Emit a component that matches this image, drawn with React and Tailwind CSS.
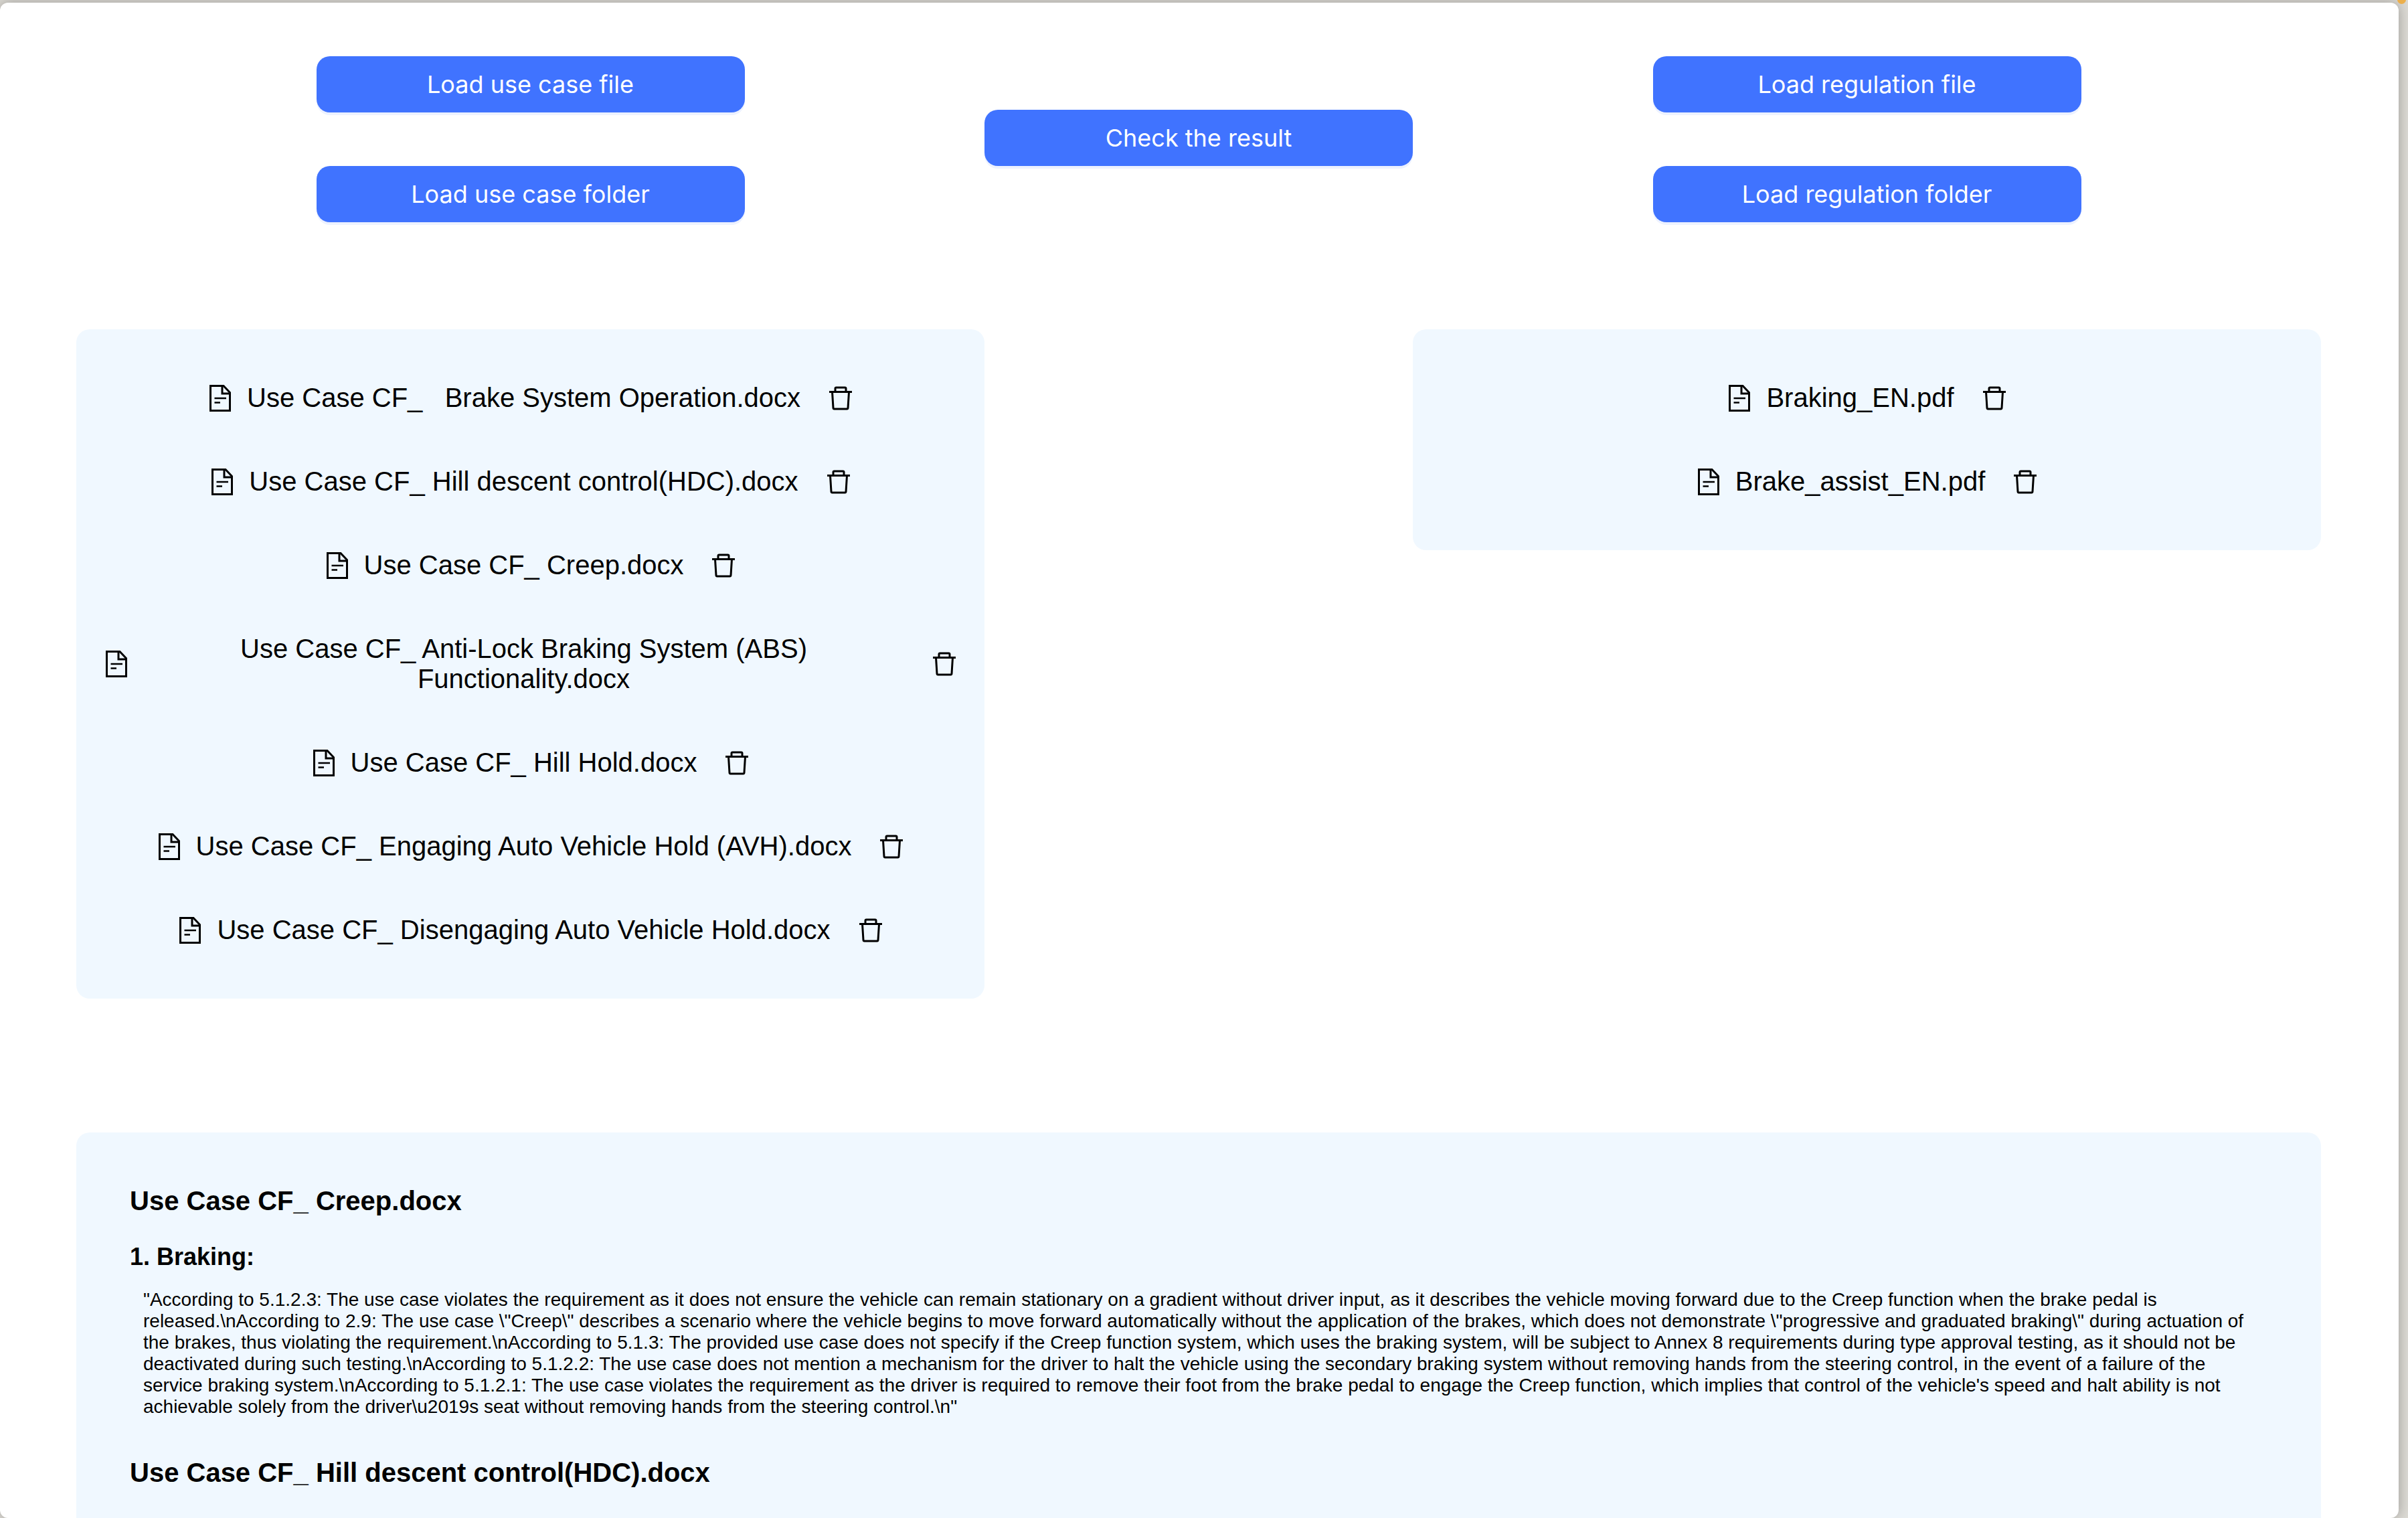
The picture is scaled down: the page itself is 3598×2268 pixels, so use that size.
const useCases = [
  'Use Case CF_ \u00a0 Brake System Operation.docx',
  'Use Case CF_ Hill descent control(HDC).docx',
  'Use Case CF_ Creep.docx',
  'Use Case CF_ Anti-Lock Braking System (ABS) Functionality.docx',
  'Use Case CF_ Hill Hold.docx',
  'Use Case CF_ Engaging Auto Vehicle Hold (AVH).docx',
  'Use Case CF_ Disengaging Auto Vehicle Hold.docx',
];

const regulations = ['Braking_EN.pdf', 'Brake_assist_EN.pdf'];

const results = [
  {
    file: 'Use Case CF_ Creep.docx',
    sections: [
      {
        title: '1. Braking:',
        text: String.raw`"According to 5.1.2.3: The use case violates the requirement as it does not ensure the vehicle can remain stationary on a gradient without driver input, as it describes the vehicle moving forward due to the Creep function when the brake pedal is released.\nAccording to 2.9: The use case \"Creep\" describes a scenario where the vehicle begins to move forward automatically without the application of the brakes, which does not demonstrate \"progressive and graduated braking\" during actuation of the brakes, thus violating the requirement.\nAccording to 5.1.3: The provided use case does not specify if the Creep function system, which uses the braking system, will be subject to Annex 8 requirements during type approval testing, as it should not be deactivated during such testing.\nAccording to 5.1.2.2: The use case does not mention a mechanism for the driver to halt the vehicle using the secondary braking system without removing hands from the steering control, in the event of a failure of the service braking system.\nAccording to 5.1.2.1: The use case violates the requirement as the driver is required to remove their foot from the brake pedal to engage the Creep function, which implies that control of the vehicle's speed and halt ability is not achievable solely from the driver` + '\\u2019' + String.raw`s seat without removing hands from the steering control.\n"`,
      },
    ],
  },
  { file: 'Use Case CF_ Hill descent control(HDC).docx', sections: [] },
];

function FileIcon() {
  return (
    <svg viewBox="0 0 40 40" className="size-10 shrink-0" fill="none" stroke="currentColor" strokeWidth="3" aria-hidden="true">
      <path d="M5.5 1.5H25L34.5 11.5V38.5H5.5Z" />
      <path d="M23 1.5V13H34.5" />
      <path d="M11.5 20H29M11.5 26.5H20" strokeWidth="2.5" />
    </svg>
  );
}

function TrashIcon() {
  return (
    <svg viewBox="0 0 40 40" className="size-10" fill="none" stroke="currentColor" strokeWidth="3" aria-hidden="true">
      <path d="M3 10.5H37" />
      <path d="M12 10.5V5.5Q12 4 13.5 4H26.5Q28 4 28 5.5V10.5" />
      <path d="M7.5 10.5L9 34.5Q9.1 36 10.5 36H29.5Q30.9 36 31 34.5L32.5 10.5" />
    </svg>
  );
}

function ActionButton({ children }) {
  return (
    <button
      type="button"
      className="h-[84px] w-[640px] rounded-[20px] bg-[#4073ff] font-['Inter',sans-serif] text-[36px] leading-[48px] text-white shadow-[0_4px_0_#edf2ff]"
    >
      {children}
    </button>
  );
}

function FileList({ files }) {
  return (
    <ul className="flex w-full flex-col gap-20 rounded-[20px] bg-[#f0f8ff] px-10 py-20">
      {files.map((name) => (
        <li key={name} className="flex items-center justify-center">
          <FileIcon />
          <span className="mr-10 ml-5 text-center">{name}</span>
          <button type="button" aria-label={`Delete ${name}`} className="shrink-0">
            <TrashIcon />
          </button>
        </li>
      ))}
    </ul>
  );
}

export default function App() {
  return (
    <div className="relative h-screen overflow-hidden bg-[#dddbd5] pt-1 pr-3.5">
      <main className="h-full overflow-hidden rounded-xl bg-white pt-20 pr-[116px] pl-[114px] font-['Liberation_Sans',Arial,sans-serif] text-[40px] leading-[45px] text-black shadow-[0_0_20px_rgba(0,0,0,0.3)]">
        <div className="flex items-start">
          <div className="flex flex-1 flex-col items-center gap-20">
            <ActionButton>Load use case file</ActionButton>
            <ActionButton>Load use case folder</ActionButton>
          </div>
          <div className="pt-20">
            <ActionButton>Check the result</ActionButton>
          </div>
          <div className="flex flex-1 flex-col items-center gap-20">
            <ActionButton>Load regulation file</ActionButton>
            <ActionButton>Load regulation folder</ActionButton>
          </div>
        </div>

        <div className="mt-40 flex items-start gap-[640px]">
          <div className="flex-1">
            <FileList files={useCases} />
          </div>
          <div className="flex-1">
            <FileList files={regulations} />
          </div>
        </div>

        <section className="mt-[200px] flex flex-col gap-[60px] rounded-[20px] bg-[#f0f8ff] p-20">
          {results.map(({ file, sections }) => (
            <article key={file}>
              <h2 className="font-bold">{file}</h2>
              {sections.map(({ title, text }) => (
                <div key={title}>
                  <h3 className="mt-10 text-[36px] leading-[41px] font-bold">{title}</h3>
                  <p className="mx-5 mt-7 text-[28px] leading-8">{text}</p>
                </div>
              ))}
            </article>
          ))}
        </section>
      </main>
      <span className="absolute -top-[7px] right-[3px] size-[13px] rounded-full bg-[#ecaf4b]" />
    </div>
  );
}
